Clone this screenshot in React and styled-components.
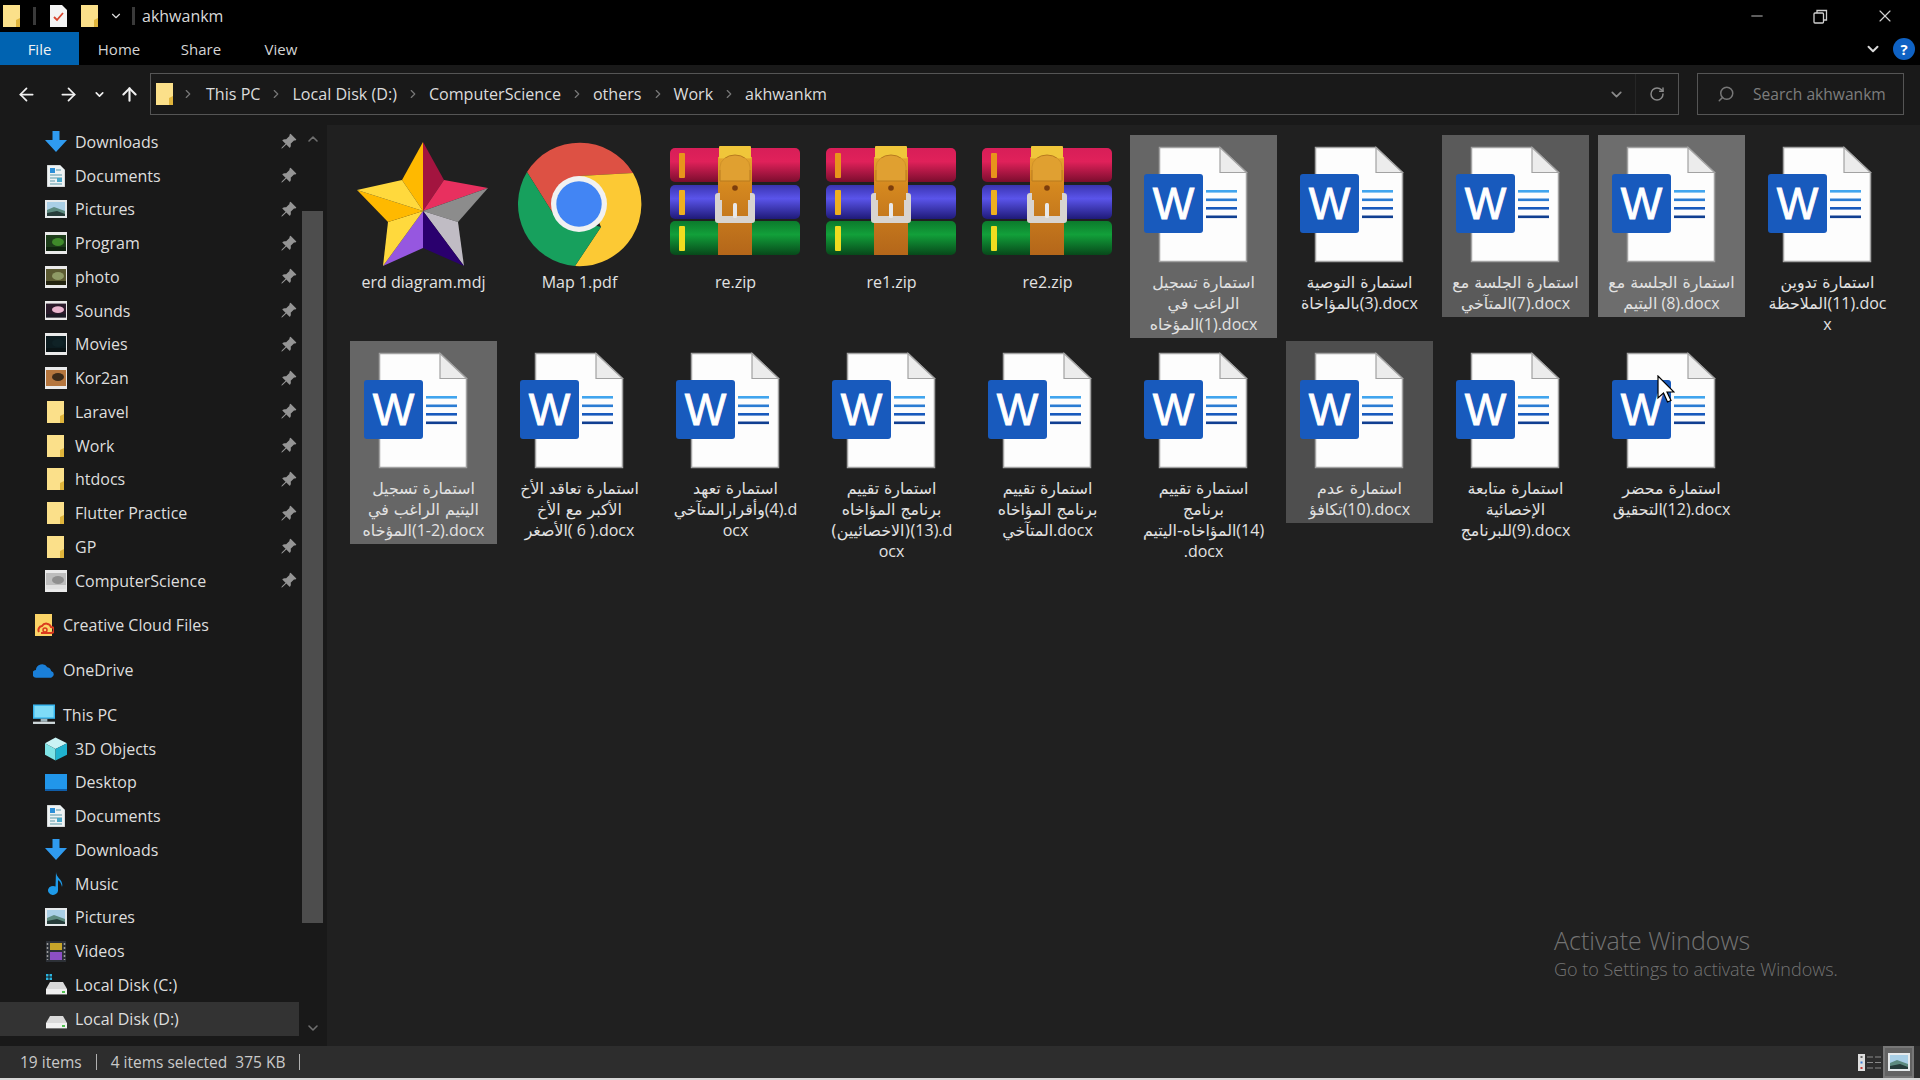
import React, { useId } from 'react'
import styled, { createGlobalStyle } from 'styled-components'
import { ArrowLeft, ArrowRight, ArrowUp, ChevronDown, ChevronRight, ChevronUp, RotateCw, Search, Minus, X } from 'lucide-react'
import { BsPinAngleFill } from 'react-icons/bs'

const FONT = `"Open Sans", "DejaVu Sans", sans-serif`

const GlobalStyle = createGlobalStyle`
  html, body { margin: 0; padding: 0; background: #000; overflow: hidden; }
  * { box-sizing: border-box; }
  body { font-family: ${FONT}; }
`

const Window = styled.div`
  width: 1920px;
  height: 1080px;
  display: flex;
  flex-direction: column;
  overflow: hidden;
  color: #e4e4e4;
  font-size: 16px;
`

/* ---------- title bar ---------- */
const TitleBar = styled.div`
  height: 32px;
  flex: none;
  background: #000;
  display: flex;
  align-items: center;
`
const QuickAccess = styled.div`
  display: flex;
  align-items: center;
  padding-left: 3px;
`
const QuickSep = styled.span`
  width: 3px;
  height: 18px;
  background: #3a3a3a;
  margin: ${p => p.$margin};
`
const TitleText = styled.span`
  font-size: 16px;
  color: #d8d8d8;
  margin-left: 7px;
`
const WinControls = styled.div`
  margin-left: auto;
  display: flex;
  align-items: center;
  gap: 47px;
  padding-right: 25px;
  color: #d0d0d0;
`

/* ---------- ribbon tabs ---------- */
const TabBar = styled.div`
  height: 33px;
  flex: none;
  background: #000;
  display: flex;
  align-items: stretch;
`
const Tab = styled.div`
  width: ${p => p.$w}px;
  display: flex;
  align-items: center;
  justify-content: center;
  font-size: 15px;
  color: ${p => (p.$active ? '#f2f2f2' : '#d4d4d4')};
  background: ${p => (p.$active ? '#0063b1' : 'transparent')};
`
const TabRight = styled.div`
  margin-left: auto;
  display: flex;
  align-items: center;
  gap: 11px;
  padding-right: 5px;
  color: #d8d8d8;
`
const HelpBadge = styled.span`
  width: 22px;
  height: 22px;
  border-radius: 50%;
  background: #0f62c4;
  color: #fff;
  font-size: 15px;
  font-weight: 700;
  display: flex;
  align-items: center;
  justify-content: center;
`

/* ---------- address row ---------- */
const NavBar = styled.div`
  height: 60px;
  flex: none;
  background: #191919;
  display: flex;
  align-items: center;
  padding-bottom: 2px;
`
const NavButtons = styled.div`
  width: 150px;
  flex: none;
  display: flex;
  align-items: center;
  padding-left: 16px;
  color: #f0f0f0;
`
const NavGap = styled.span`
  width: ${p => p.$w}px;
  flex: none;
`
const AddressBox = styled.div`
  width: 1529px;
  height: 42px;
  flex: none;
  border: 1.5px solid #555;
  display: flex;
  align-items: center;
  padding-left: 5px;
`
const Crumb = styled.span`
  font-size: 16.1px;
  color: #dcdcdc;
`
const CrumbChevron = styled(ChevronRight)`
  width: 14px;
  height: 14px;
  color: #777;
  margin: 0 9px;
  flex: none;
`
const FirstChevron = styled(CrumbChevron)`
  margin: 0 11px 0 7px;
`
const AddressEnd = styled.div`
  margin-left: auto;
  height: 100%;
  display: flex;
  align-items: center;
  color: #8a8a8a;
`
const AddressDrop = styled.div`
  width: 46px;
  display: flex;
  justify-content: center;
  padding-left: 7px;
  border-right: 1px solid #262626;
  height: 100%;
  align-items: center;
`
const AddressRefresh = styled.div`
  width: 42px;
  display: flex;
  justify-content: center;
`
const SearchBox = styled.div`
  width: 207px;
  height: 42px;
  flex: none;
  margin-left: 18px;
  border: 1.5px solid #555;
  display: flex;
  align-items: center;
  padding-left: 19px;
  gap: 18px;
  font-size: 15.6px;
  color: #7d7d7d;
`
const SearchGlyph = styled(Search)`
  width: 18px;
  height: 18px;
  transform: scaleX(-1);
  color: #777;
  flex: none;
`

/* ---------- main area ---------- */
const Main = styled.div`
  flex: 1;
  min-height: 0;
  display: flex;
`
const Sidebar = styled.div`
  width: 327px;
  flex: none;
  background: #191919;
  display: flex;
  padding-right: 4px;
`
const NavList = styled.div`
  width: 302px;
  flex: none;
  overflow: hidden;
`
const NavRow = styled.div`
  height: 33.75px;
  display: flex;
  align-items: center;
  padding-left: ${p => (p.$top ? 33 : 45)}px;
  margin-top: ${p => (p.$gapTop ? 11 : 0)}px;
  margin-right: 3px;
  gap: 8px;
  font-size: 16px;
  color: #dedede;
  background: ${p => (p.$active ? '#333' : 'transparent')};
`
const NavIcon = styled.span`
  width: 22px;
  height: 24px;
  flex: none;
  display: flex;
  align-items: center;
  justify-content: center;
`
const PinSlot = styled.span`
  margin-left: auto;
  margin-right: 2px;
  display: flex;
  color: #959595;
`
const ScrollTrack = styled.div`
  width: 21px;
  flex: none;
  display: flex;
  flex-direction: column;
  align-items: center;
  color: #6f6f6f;
  padding-top: 6px;
`
const ScrollThumb = styled.div`
  width: 21px;
  height: 712px;
  background: #4d4d4d;
  margin: 64px 0 97px;
  flex: none;
`
const Content = styled.div`
  flex: 1;
  min-width: 0;
  position: relative;
  background: #202020;
  display: flex;
  flex-wrap: wrap;
  align-content: flex-start;
  align-items: flex-start;
  gap: 3px 9px;
  padding: 10px 0 0 23px;
`
const Tile = styled.div`
  width: 147px;
  padding-bottom: 3px;
  display: flex;
  flex-direction: column;
  align-items: center;
  background: ${p => p.$bg || 'transparent'};
`
const TileIcon = styled.svg`
  width: 147px;
  height: 137px;
  display: block;
  flex: none;
`
const Label = styled.div`
  width: 100%;
  text-align: center;
  direction: ltr;
  font-size: 16px;
  line-height: 21px;
  color: #e2e2e2;
`
const LabelLine = styled.div`
  white-space: nowrap;
  height: 21px;
`
const Arabic = styled.span`
  font-family: "DejaVu Sans", sans-serif;
  font-size: 15.8px;
  unicode-bidi: isolate;
  direction: rtl;
`
const Watermark = styled.div`
  position: absolute;
  left: 1227px;
  top: 798px;
  color: #737373;
  pointer-events: none;
`
const WatermarkTitle = styled.div`
  font-size: 25px;
  font-weight: 300;
  line-height: 34px;
`
const WatermarkSub = styled.div`
  font-size: 18px;
  font-weight: 300;
  line-height: 24px;
`
const Cursor = styled.svg`
  position: absolute;
  left: 1330px;
  top: 250px;
  width: 18px;
  height: 28px;
`

/* ---------- status bar ---------- */
const StatusBar = styled.div`
  height: 32px;
  flex: none;
  background: #2d2d2d;
  display: flex;
  align-items: center;
  padding-left: 20px;
  font-size: 15.5px;
  color: #c9c9c9;
`
const StatusSep = styled.span`
  width: 1px;
  height: 16px;
  background: #b0b0b0;
  margin: ${p => p.$margin};
`
const ViewButtons = styled.div`
  margin-left: auto;
  height: 100%;
  display: flex;
  align-items: center;
  padding-right: 6px;
`
const ViewBtn = styled.div`
  width: ${p => p.$w}px;
  height: 100%;
  display: flex;
  align-items: center;
  justify-content: center;
  background: ${p => (p.$active ? '#636363' : 'transparent')};
  border: ${p => (p.$active ? '2px solid #777' : 'none')};
`
const BottomLine = styled.div`
  height: 2px;
  flex: none;
  background: #d8d8d8;
`

/* ---------- small icons ---------- */
const FolderGlyph = ({ w = 18, h = 22 }) => (
  <svg width={w} height={h} viewBox="0 0 18 22">
    <path d="M0 0H17V22H0Z" fill="#fbe08a" />
    <path d="M13 22V15L17 13V22Z" fill="#e0b53c" />
  </svg>
)

const QuickDoc = () => (
  <svg width="17" height="22" viewBox="0 0 17 22">
    <path d="M0 0H12L17 5V22H0Z" fill="#f4f4f4" />
    <path d="M4 12L7 15L13 8" fill="none" stroke="#d8452e" strokeWidth="1.8" />
  </svg>
)

const DownloadGlyph = () => (
  <svg width="22" height="22" viewBox="0 0 22 22">
    <path d="M7.5 0H14.5V9H22L11 21L0 9H7.5Z" fill="#2f9bf0" />
  </svg>
)

const DocumentsGlyph = () => (
  <svg width="18" height="22" viewBox="0 0 18 22">
    <path d="M0 0H13L18 5V22H0Z" fill="#eef3f4" stroke="#9a9a9a" strokeWidth=".6" />
    <rect x="3" y="3" width="5" height="5" fill="#2b8fd8" />
    <path d="M9 5H14M3 10H15M3 13H15M3 16H8M3 19H15" stroke="#5a9aa8" strokeWidth="1.2" />
    <rect x="10" y="13" width="5" height="4" fill="#4aa9c9" />
  </svg>
)

const PicturesGlyph = () => (
  <svg width="22" height="18" viewBox="0 0 22 18">
    <rect width="22" height="18" fill="#e6eaec" />
    <rect x="2" y="2" width="18" height="14" fill="#a9cfe6" />
    <path d="M2 10L9 7L20 11V16H2Z" fill="#5d8b80" />
    <path d="M2 13L12 11L20 14V16H2Z" fill="#263c3a" />
  </svg>
)

const Thumb = ({ a, b, c, tall = 22 }) => (
  <svg width="22" height={tall} viewBox="0 0 22 22" preserveAspectRatio="none">
    <rect width="22" height="22" fill="#eaeaea" />
    <rect x="1" y="3" width="20" height="16" fill={a} />
    <ellipse cx="13" cy="10" rx="6" ry="4" fill={b} />
    <rect x="1" y="15" width="20" height="4" fill={c} />
  </svg>
)

const CreativeGlyph = () => (
  <svg width="19" height="22" viewBox="0 0 19 22">
    <rect width="17" height="22" fill="#fbd467" />
    <path d="M4 18A4 4 0 0 1 7 12A5 5 0 0 1 16 13A3 3 0 0 1 16 19H6" fill="none" stroke="#da3a1e" strokeWidth="2" />
    <circle cx="10" cy="16" r="2" fill="none" stroke="#da3a1e" strokeWidth="1.5" />
  </svg>
)

const CloudGlyph = () => (
  <svg width="23" height="15" viewBox="0 0 23 15">
    <path d="M4 15A4 4 0 0 1 3 7A6.5 6.5 0 0 1 15 4A5 5 0 0 1 19 8A3.6 3.6 0 0 1 19 15Z" fill="#1a7fd8" />
  </svg>
)

const PcGlyph = () => (
  <svg width="23" height="21" viewBox="0 0 23 21">
    <rect x="0" y="0" width="23" height="15" fill="#37b5ee" />
    <rect x="1.5" y="1.5" width="20" height="12" fill="#7fdcf8" />
    <rect x="8" y="15" width="7" height="3" fill="#9fb5bc" />
    <rect x="0" y="18" width="23" height="2.4" fill="#cfd8da" />
  </svg>
)

const CubeGlyph = () => (
  <svg width="23" height="24" viewBox="0 0 23 24">
    <path d="M11 0L23 6L11 12L0 6Z" fill="#c9f3f5" />
    <path d="M0 6L11 12V24L0 18Z" fill="#7fe3e6" />
    <path d="M23 6V18L11 24V12Z" fill="#1fb2cf" />
  </svg>
)

const DesktopGlyph = () => (
  <svg width="22" height="17" viewBox="0 0 22 17">
    <rect width="22" height="17" fill="#2196ea" />
    <path d="M0 15H22V17H0Z" fill="#0f5da8" />
  </svg>
)

const MusicGlyph = () => (
  <svg width="16" height="23" viewBox="0 0 16 23">
    <path d="M8 0C8 6 16 8 14 15C13 10 11 9 10 8V18A5 4.5 0 1 1 7.5 14.5Z" fill="#1e9ae8" />
  </svg>
)

const VideosGlyph = () => (
  <svg width="20" height="21" viewBox="0 0 20 21">
    <rect width="20" height="21" fill="#2c3036" />
    <rect x="4" y="2" width="12" height="7" fill="#c7a52a" />
    <rect x="4" y="11" width="12" height="8" fill="#8c4fc4" />
    <path d="M1.5 2V19M18.5 2V19" stroke="#9a9a9a" strokeWidth="1.5" strokeDasharray="2 2" />
  </svg>
)

const DriveGlyph = ({ win }) => (
  <svg width="21" height="22" viewBox="0 0 21 22">
    {win && <path d="M0 0H2.5V2.5H0ZM3.5 0H6V2.5H3.5ZM0 3.5H2.5V6H0ZM3.5 3.5H6V6H3.5Z" fill="#2ab4e0" />}
    <path d="M4 8H17L21 15H0Z" fill="#d9d9d9" />
    <rect x="0" y="15" width="21" height="6" fill="#f0f0f0" />
    <rect x="16" y="17" width="3" height="2" fill="#4fc04f" />
    <rect x="0" y="20" width="21" height="1" fill="#777" />
  </svg>
)

const RestoreGlyph = () => (
  <svg width="15" height="15" viewBox="0 0 15 15" fill="none" stroke="currentColor" strokeWidth="1.3">
    <rect x="1" y="4" width="9.5" height="10" rx="1" />
    <path d="M4 4V1.5H13.5V11H10.5" />
  </svg>
)

const DetailsGlyph = () => (
  <svg width="23" height="17" viewBox="0 0 23 17">
    <rect width="7" height="17" fill="#dedede" />
    <rect x="2.5" y="2" width="2" height="2" fill="#666" />
    <rect x="2.5" y="7.5" width="2" height="2" fill="#3a7bd5" />
    <rect x="2.5" y="13" width="2" height="2" fill="#c43b3b" />
    <path d="M9 3H15M17 3H23M9 8.5H15M17 8.5H23M9 14H15M17 14H23" stroke="#8a8a8a" strokeWidth="1.2" />
  </svg>
)

/* ---------- file icons, drawn in the 147x137 icon area of a tile ---------- */
const StarIcon = () => (
  <TileIcon viewBox="0 0 147 137">
    <path d="M73 7L52 45L73 76Z" fill="#ffb900" />
    <path d="M73 7L73 76L94 45Z" fill="#a3143f" />
    <path d="M94 45L138 53L73 76Z" fill="#e8305f" />
    <path d="M138 53L108 87L73 76Z" fill="#8c8c8c" />
    <path d="M73 76L108 87L114 131Z" fill="#c0bcc4" />
    <path d="M73 76L114 131L73 113Z" fill="#2a006e" />
    <path d="M73 76L73 113L33 131Z" fill="#9657e0" />
    <path d="M73 76L33 131L38 87Z" fill="#ffd93d" />
    <path d="M73 76L38 87L7 55Z" fill="#ffb900" />
    <path d="M7 55L52 45L73 76Z" fill="#ffd93d" />
  </TileIcon>
)

const ChromeIcon = () => (
  <TileIcon viewBox="0 0 147 137">
    <path d="M21 37A62 62 0 0 1 127 38L73 41L48 80Z" fill="#dd5144" />
    <path d="M127 38A62 62 0 0 1 69 131L95 92L73 41Z" fill="#fcc934" />
    <path d="M69 131A62 62 0 0 1 21 37L48 80L95 92Z" fill="#17a05d" />
    <circle cx="73" cy="69" r="28" fill="#f1f1f1" />
    <circle cx="73" cy="69" r="22.7" fill="#4285f4" />
  </TileIcon>
)

const RarIcon = () => {
  const id = useId()
  const books = [
    { y: 13, top: '#d81e58', mid: '#e0215a', low: '#7c0d2e', tab: '#e8941c' },
    { y: 50, top: '#3a34b0', mid: '#5a54ea', low: '#1f1a78', tab: '#eeb020' },
    { y: 86, top: '#0c7a2c', mid: '#12a03a', low: '#07481a', tab: '#f0dc20' },
  ]
  return (
    <TileIcon viewBox="0 0 147 137">
      <defs>
        {books.map((b, i) => (
          <linearGradient key={i} id={`${id}b${i}`} x1="0" y1="0" x2="0" y2="1">
            <stop offset="0" stopColor={b.top} />
            <stop offset=".4" stopColor={b.mid} />
            <stop offset="1" stopColor={b.low} />
          </linearGradient>
        ))}
        <linearGradient id={`${id}s`} x1="0" y1="0" x2="0" y2="1">
          <stop offset="0" stopColor="#e8a52a" />
          <stop offset=".3" stopColor="#d4881f" />
          <stop offset="1" stopColor="#b4661a" />
        </linearGradient>
      </defs>
      {books.map((b, i) => (
        <g key={i}>
          <rect x="8" y={b.y} width="130" height="34" rx="5" fill={`url(#${id}b${i})`} />
          <rect x="17" y={b.y + 5} width="6" height="25" rx="1" fill={b.tab} />
        </g>
      ))}
      <rect x="56" y="22" width="34" height="98" fill={`url(#${id}s)`} />
      <rect x="57" y="11" width="32" height="13" rx="1" fill="#f0c63a" />
      <path d="M58 46V32A15 12 0 0 1 88 32V46Z" fill="#e0a032" stroke="#b87a1e" strokeWidth="1" />
      <path d="M56 23H90V35H56Z" fill="#dfa02e" opacity=".6" />
      <circle cx="73" cy="53" r="2.8" fill="#7c3d0c" />
      <path d="M53 85V61A3 3 0 0 1 56 58H58V65H60V81H86V65H88V58H90A3 3 0 0 1 93 61V85A3 3 0 0 1 90 88H56A3 3 0 0 1 53 85Z" fill="#d8d4d0" />
      <rect x="71" y="68" width="4" height="15" rx="1.5" fill="#e8e8e8" />
    </TileIcon>
  )
}

const WordIcon = () => (
  <TileIcon viewBox="0 0 147 137">
    <path d="M29.5 12.5H90L116.5 37.5V126.5H29.5Z" fill="#fdfdfd" stroke="#a2a2a2" strokeWidth="1.5" />
    <path d="M90 12.5V37.5H116.5Z" fill="#ececec" stroke="#a2a2a2" strokeWidth="1.2" />
    <rect x="14" y="39" width="59" height="59" rx="3" fill="#185abd" />
    <text x="43.5" y="84" textAnchor="middle" fontFamily="Liberation Sans, sans-serif" fontSize="44" fill="#fff" stroke="#fff" strokeWidth=".9">W</text>
    <rect x="76" y="55" width="31" height="2.6" fill="#41a5ee" />
    <rect x="76" y="63.5" width="31" height="2.6" fill="#2b7cd3" />
    <rect x="76" y="72" width="31" height="2.6" fill="#185abd" />
    <rect x="76" y="80.5" width="31" height="2.6" fill="#103f91" />
  </TileIcon>
)

/* ---------- data ---------- */
const pinned = [
  ['Downloads', <DownloadGlyph />],
  ['Documents', <DocumentsGlyph />],
  ['Pictures', <PicturesGlyph />],
  ['Program', <Thumb a="#1d3d1a" b="#3f8a2a" c="#10240f" />],
  ['photo', <Thumb a="#5b5a32" b="#8f9a66" c="#23230f" />],
  ['Sounds', <Thumb a="#2a1a2a" b="#eab6cf" c="#1a1a24" tall={19} />],
  ['Movies', <Thumb a="#0c1c20" b="#0f2226" c="#0a1416" />],
  ['Kor2an', <Thumb a="#b5763e" b="#3a2a1a" c="#b5763e" />],
  ['Laravel', <FolderGlyph />],
  ['Work', <FolderGlyph />],
  ['htdocs', <FolderGlyph />],
  ['Flutter Practice', <FolderGlyph />],
  ['GP', <FolderGlyph />],
  ['ComputerScience', <Thumb a="#bdbdbd" b="#8f8f8f" c="#e0e0e0" />],
]

const thisPc = [
  ['3D Objects', <CubeGlyph />],
  ['Desktop', <DesktopGlyph />],
  ['Documents', <DocumentsGlyph />],
  ['Downloads', <DownloadGlyph />],
  ['Music', <MusicGlyph />],
  ['Pictures', <PicturesGlyph />],
  ['Videos', <VideosGlyph />],
  ['Local Disk (C:)', <DriveGlyph win />],
]

const SEL = '#666'
const SEL_DIM = '#5a5a5a'
const SEL_BRIGHT = '#6d6d6d'
const HOVER = '#4e4e4e'

// each label line is [arabic part, latin part]
const files = [
  { Icon: StarIcon, lines: [['', 'erd diagram.mdj']] },
  { Icon: ChromeIcon, lines: [['', 'Map 1.pdf']] },
  { Icon: RarIcon, lines: [['', 're.zip']] },
  { Icon: RarIcon, lines: [['', 're1.zip']] },
  { Icon: RarIcon, lines: [['', 're2.zip']] },
  { Icon: WordIcon, bg: SEL, lines: [['استمارة  تسجيل', ''], ['الراغب في', ''], ['المؤخاه', '(1).docx']] },
  { Icon: WordIcon, lines: [['استمارة التوصية', ''], ['بالمؤاخاة', '(3).docx']] },
  { Icon: WordIcon, bg: SEL_DIM, lines: [['استمارة الجلسة مع', ''], ['المتآخي', '(7).docx']] },
  { Icon: WordIcon, bg: SEL_BRIGHT, lines: [['استمارة الجلسة مع', ''], ['اليتيم', ' (8).docx']] },
  { Icon: WordIcon, lines: [['استمارة تدوين', ''], ['الملاحظة', '(11).doc'], ['', 'x']] },
  { Icon: WordIcon, bg: SEL, lines: [['استمارة تسجيل', ''], ['اليتيم الراغب في', ''], ['المؤخاه', '(1-2).docx']] },
  { Icon: WordIcon, lines: [['استمارة تعاقد الأخ', ''], ['الأكبر مع الأخ', ''], ['الأصغر', '( 6 ).docx']] },
  { Icon: WordIcon, lines: [['استمارة تعهد', ''], ['وأقرارالمتآخي', '(4).d'], ['', 'ocx']] },
  { Icon: WordIcon, lines: [['استمارة تقييم', ''], ['برنامج المؤاخاه', ''], ['(الاخصائيين)', '(13).d'], ['', 'ocx']] },
  { Icon: WordIcon, lines: [['استمارة تقييم', ''], ['برنامج المؤاخاه', ''], ['المتآخي', '.docx']] },
  { Icon: WordIcon, lines: [['استمارة تقييم', ''], ['برنامج', ''], ['المؤاخاه-اليتيم', '(14)'], ['', '.docx']] },
  { Icon: WordIcon, bg: HOVER, lines: [['استمارة عدم', ''], ['تكافؤ', '(10).docx']] },
  { Icon: WordIcon, lines: [['استمارة متابعة', ''], ['الإخصائية', ''], ['للبرنامج', '(9).docx']] },
  { Icon: WordIcon, lines: [['استمارة محضر', ''], ['التحقيق', '(12).docx']] },
]

const crumbs = ['This PC', 'Local Disk (D:)', 'ComputerScience', 'others', 'Work', 'akhwankm']

function FileTile({ file }) {
  const { Icon, bg, lines } = file
  return (
    <Tile $bg={bg}>
      <Icon />
      <Label>
        {lines.map(([ar, en], i) => (
          <LabelLine key={i}>
            {ar && <Arabic>{ar}</Arabic>}
            {en}
          </LabelLine>
        ))}
      </Label>
    </Tile>
  )
}

export default function App() {
  return (
    <Window>
      <GlobalStyle />
      <TitleBar>
        <QuickAccess>
          <FolderGlyph />
          <QuickSep $margin="0 14px 0 12px" />
          <QuickDoc />
          <NavGap $w={14} />
          <FolderGlyph />
          <NavGap $w={10} />
          <ChevronDown size={14} color="#ddd" />
          <QuickSep $margin="0 0 0 9px" />
        </QuickAccess>
        <TitleText>akhwankm</TitleText>
        <WinControls>
          <Minus size={18} strokeWidth={1.2} />
          <RestoreGlyph />
          <X size={20} strokeWidth={1.4} />
        </WinControls>
      </TitleBar>

      <TabBar>
        <Tab $w={79} $active>File</Tab>
        <Tab $w={80}>Home</Tab>
        <Tab $w={84}>Share</Tab>
        <Tab $w={76}>View</Tab>
        <TabRight>
          <ChevronDown size={18} strokeWidth={2.6} />
          <HelpBadge>?</HelpBadge>
        </TabRight>
      </TabBar>

      <NavBar>
        <NavButtons>
          <ArrowLeft size={21} strokeWidth={2} />
          <NavGap $w={21} />
          <ArrowRight size={21} strokeWidth={2} />
          <NavGap $w={14} />
          <ChevronDown size={13} strokeWidth={3} />
          <NavGap $w={13} />
          <ArrowUp size={21} strokeWidth={2.4} />
        </NavButtons>
        <AddressBox>
          <FolderGlyph />
          <FirstChevron />
          {crumbs.map((c, i) => (
            <React.Fragment key={c}>
              <Crumb>{c}</Crumb>
              {i < crumbs.length - 1 && <CrumbChevron />}
            </React.Fragment>
          ))}
          <AddressEnd>
            <AddressDrop><ChevronDown size={17} strokeWidth={2.4} /></AddressDrop>
            <AddressRefresh><RotateCw size={16} strokeWidth={2.2} /></AddressRefresh>
          </AddressEnd>
        </AddressBox>
        <SearchBox>
          <SearchGlyph />
          Search akhwankm
        </SearchBox>
      </NavBar>

      <Main>
        <Sidebar>
          <NavList>
            {pinned.map(([name, icon]) => (
              <NavRow key={name}>
                <NavIcon>{icon}</NavIcon>
                {name}
                <PinSlot><BsPinAngleFill size={17} /></PinSlot>
              </NavRow>
            ))}
            <NavRow $top $gapTop>
              <NavIcon><CreativeGlyph /></NavIcon>Creative Cloud Files
            </NavRow>
            <NavRow $top $gapTop>
              <NavIcon><CloudGlyph /></NavIcon>OneDrive
            </NavRow>
            <NavRow $top $gapTop>
              <NavIcon><PcGlyph /></NavIcon>This PC
            </NavRow>
            {thisPc.map(([name, icon]) => (
              <NavRow key={name}>
                <NavIcon>{icon}</NavIcon>
                {name}
              </NavRow>
            ))}
            <NavRow $active>
              <NavIcon><DriveGlyph /></NavIcon>Local Disk (D:)
            </NavRow>
          </NavList>
          <ScrollTrack>
            <ChevronUp size={16} strokeWidth={2.4} />
            <ScrollThumb />
            <ChevronDown size={16} strokeWidth={2.4} />
          </ScrollTrack>
        </Sidebar>

        <Content>
          {files.map((f, i) => (
            <FileTile key={i} file={f} />
          ))}
          <Cursor viewBox="0 0 18 28">
            <path d="M1 1V23L6.5 18L10.5 27L14 25.5L10 17H17Z" fill="#fff" stroke="#000" strokeWidth="1.2" />
          </Cursor>
          <Watermark>
            <WatermarkTitle>Activate Windows</WatermarkTitle>
            <WatermarkSub>Go to Settings to activate Windows.</WatermarkSub>
          </Watermark>
        </Content>
      </Main>

      <StatusBar>
        19 items
        <StatusSep $margin="0 14px 0 14px" />
        4 items selected&nbsp;&nbsp;375 KB
        <StatusSep $margin="0 0 0 14px" />
        <ViewButtons>
          <ViewBtn $w={27}><DetailsGlyph /></ViewBtn>
          <ViewBtn $w={31} $active><PicturesGlyph /></ViewBtn>
        </ViewButtons>
      </StatusBar>
      <BottomLine />
    </Window>
  )
}
